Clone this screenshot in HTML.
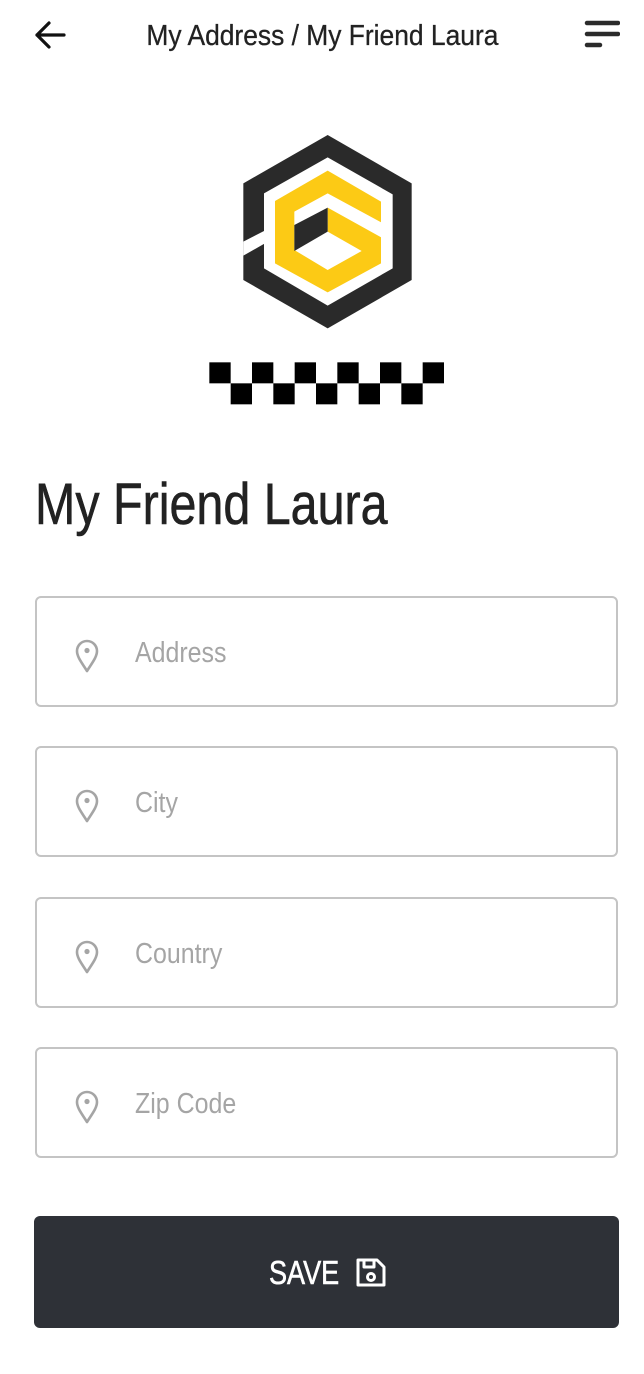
<!DOCTYPE html>
<html><head><meta charset="utf-8"><style>
*{margin:0;padding:0;box-sizing:border-box}
body{width:644px;height:1374px;background:#fff;position:relative;font-family:"Liberation Sans",sans-serif;color:#1f2024;overflow:hidden}
.abs{position:absolute}
.n{display:inline-block;transform-origin:left center}
.hdr{left:0;width:644px;top:16px;text-align:center;font-size:29px;line-height:40px;color:#222;-webkit-text-stroke:0.3px #222}
.hdr .n{transform:scaleX(0.91);transform-origin:center}
.title{left:35px;top:470px;font-size:58px;line-height:70px;color:#222;-webkit-text-stroke:0.6px #222}
.title .n{transform:scaleX(0.835)}
.field{position:absolute;left:35px;width:583px;height:111px;border:2px solid #c4c4c4;border-radius:6px}
.field svg{position:absolute;left:37px;top:40px}
.field span{position:absolute;left:98px;top:35px;font-size:29px;line-height:40px;color:#a5a5a5;transform:scaleX(0.86);transform-origin:left center}
.btn{left:34px;top:1216px;width:585px;height:112px;background:#2e3137;border-radius:6px}
.btn span{position:absolute;left:235px;top:36px;font-size:33px;line-height:42px;color:#fff;transform:scaleX(0.82);transform-origin:left center;-webkit-text-stroke:0.6px #fff}
</style></head><body>
<svg class="abs" style="left:32px;top:20px" width="36" height="32" viewBox="0 0 36 32"><path d="M32 15H5M17 3L5 15l12 12" fill="none" stroke="#111" stroke-width="3.2" stroke-linecap="round" stroke-linejoin="round"/></svg>
<div class="abs hdr"><span class="n">My Address / My Friend Laura</span></div>
<svg class="abs" style="left:584px;top:19px" width="36" height="30" viewBox="0 0 36 30"><g stroke="#2b2b2b" stroke-width="4.5" stroke-linecap="round"><path d="M3 4h31M3 15h31M3 26h13"/></g></svg>

<svg class="abs" style="left:200px;top:125px" width="250" height="290" viewBox="0 0 750 870">
<polygon points="383,30 635,175 635,465 383,610 130,465 130,175" fill="#2a2a2a"/>
<polygon points="383,97 578,208 578,430 383,542 192,430 192,205" fill="#fff"/>
<polygon points="192,318 228,336 130,392 130,350" fill="#fff"/>
<polygon points="383,137 543,230 543,415 383,502 225,415 225,228" fill="#fcca15"/>
<polygon points="545,293 383,205 283,260 283,375 383,435 485,378 383,320 383,248 545,338" fill="#fff"/>
<polygon points="383,248 383,320 283,378 283,300" fill="#2a2a2a"/>
<g fill="#000">
<rect x="28" y="712" width="64" height="63"/><rect x="156" y="712" width="64" height="63"/><rect x="284" y="712" width="64" height="63"/><rect x="412" y="712" width="64" height="63"/><rect x="540" y="712" width="64" height="63"/><rect x="668" y="712" width="64" height="63"/>
<rect x="92" y="775" width="64" height="63"/><rect x="220" y="775" width="64" height="63"/><rect x="348" y="775" width="64" height="63"/><rect x="476" y="775" width="64" height="63"/><rect x="604" y="775" width="64" height="63"/>
</g></svg>

<div class="abs title"><span class="n">My Friend Laura</span></div>

<div class="field" style="top:596px"><svg width="26" height="36" viewBox="0 0 26 36"><path d="M13 33C8 25 3 19 3 13a10 10 0 0 1 20 0c0 6-5 12-10 20z" fill="none" stroke="#a5a5a5" stroke-width="2.6" stroke-linejoin="round"/><circle cx="13" cy="12.5" r="2.6" fill="#a5a5a5"/></svg><span>Address</span></div>
<div class="field" style="top:746px"><svg width="26" height="36" viewBox="0 0 26 36"><path d="M13 33C8 25 3 19 3 13a10 10 0 0 1 20 0c0 6-5 12-10 20z" fill="none" stroke="#a5a5a5" stroke-width="2.6" stroke-linejoin="round"/><circle cx="13" cy="12.5" r="2.6" fill="#a5a5a5"/></svg><span>City</span></div>
<div class="field" style="top:897px"><svg width="26" height="36" viewBox="0 0 26 36"><path d="M13 33C8 25 3 19 3 13a10 10 0 0 1 20 0c0 6-5 12-10 20z" fill="none" stroke="#a5a5a5" stroke-width="2.6" stroke-linejoin="round"/><circle cx="13" cy="12.5" r="2.6" fill="#a5a5a5"/></svg><span>Country</span></div>
<div class="field" style="top:1047px"><svg width="26" height="36" viewBox="0 0 26 36"><path d="M13 33C8 25 3 19 3 13a10 10 0 0 1 20 0c0 6-5 12-10 20z" fill="none" stroke="#a5a5a5" stroke-width="2.6" stroke-linejoin="round"/><circle cx="13" cy="12.5" r="2.6" fill="#a5a5a5"/></svg><span>Zip Code</span></div>

<div class="abs btn"><span>SAVE</span>
<svg class="abs" style="left:321px;top:41px" width="32" height="31" viewBox="0 0 32 31"><g fill="none" stroke="#fff" stroke-width="3" stroke-linejoin="round"><path d="M3 3h19l7 7v18H3z"/><path d="M9 3v7h10V3"/><circle cx="16" cy="20" r="3.5"/></g></svg>
</div>
</body></html>
